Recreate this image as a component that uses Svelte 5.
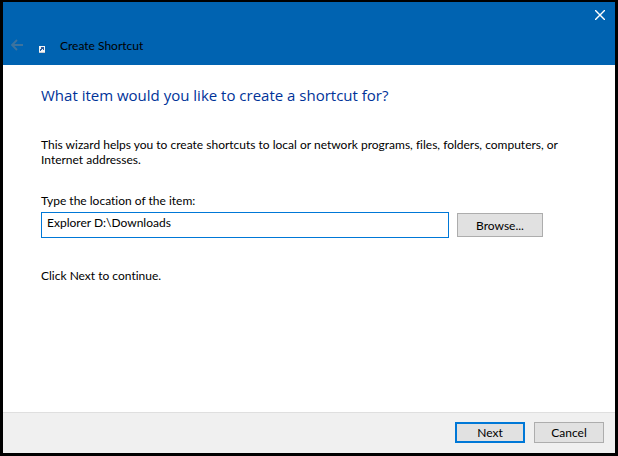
<script>
	let location = $state('Explorer D:\\Downloads');
</script>

<div class="window">
	<header>
		<div class="controls">
			<button class="close" aria-label="Close">
				<svg width="10" height="10" viewBox="0 0 10 10">
					<path d="M0 0L10 10M10 0L0 10" stroke="#fff" stroke-width="1.4" />
				</svg>
			</button>
		</div>
		<div class="title">
			<button class="back" aria-label="Back" disabled>
				<svg width="12" height="12" viewBox="0 0 12 12" fill="none">
					<path d="M12 6H1M6 1L1 6L6 11" stroke="#3d739e" stroke-width="1.8" />
				</svg>
			</button>
			<svg class="shortcut" width="6" height="7" viewBox="0 0 6 7" shape-rendering="crispEdges">
				<path d="M0 0H6V7H0Z" fill="#f3f4f6" />
				<path d="M2 1H5V4H4V3H3V4H2V5H1V3H2Z" fill="#2c5c9c" />
				<path d="M0 6H6V7H0Z" fill="#c9ccd2" />
			</svg>
			<span>Create Shortcut</span>
		</div>
	</header>

	<main>
		<h1>What item would you like to create a shortcut for?</h1>
		<p class="intro">This wizard helps you to create shortcuts to local or network programs, files, folders, computers, or Internet addresses.</p>
		<label for="location">Type the location of the item:</label>
		<div class="row">
			<input id="location" type="text" bind:value={location} />
			<button class="btn browse">Browse...</button>
		</div>
		<p>Click Next to continue.</p>
	</main>

	<footer>
		<button class="btn default">Next</button>
		<button class="btn">Cancel</button>
	</footer>
</div>

<style>
	:global(body) {
		background: #000;
	}

	.window {
		box-sizing: border-box;
		display: flex;
		flex-direction: column;
		min-height: 100vh;
		border: 3px solid #000;
		border-top-width: 2px;
		background: #fff;
		color: #000;
		font-family: "Segoe UI", Lato, sans-serif;
		font-size: 12px;
		line-height: 15px;
		font-variant-ligatures: none;
	}

	button, input {
		font: inherit;
		color: inherit;
	}

	header {
		background: #0063b1;
		padding-bottom: 5px;
	}

	.controls {
		display: flex;
		justify-content: flex-end;
	}

	.close, .back {
		display: flex;
		border: 0;
		padding: 0;
		background: none;
	}

	.close {
		padding: 8px 10px;
	}

	.title {
		display: flex;
		align-items: center;
		height: 32px;
		padding-left: 8px;
	}

	.title span {
		padding-top: 2px;
	}

	.back {
		padding-top: 2px;
	}

	.shortcut {
		margin: 10px 15px 0 16px;
	}

	main {
		flex: 1;
		padding: 19px 38px;
	}

	h1 {
		margin: 0 0 31px;
		font-family: "Segoe UI", "Open Sans", sans-serif;
		font-size: 15px;
		line-height: 22px;
		font-weight: 400;
		color: #003399;
	}

	p {
		margin: 0;
	}

	.intro {
		margin-bottom: 26px;
	}

	label {
		display: block;
		margin-bottom: 4px;
	}

	.row {
		display: flex;
		align-items: center;
		gap: 8px;
		margin: 0 34px 30px 0;
	}

	input {
		box-sizing: border-box;
		flex: 1;
		min-width: 0;
		height: 26px;
		padding: 0 5px 5px;
		border: 1px solid #0078d7;
		border-radius: 0;
		background: #fff;
		outline: none;
	}

	.btn {
		box-sizing: border-box;
		width: 70px;
		height: 21px;
		padding: 0;
		border: 1px solid #adadad;
		background: #e1e1e1;
	}

	.browse {
		width: 86px;
		height: 24px;
	}

	.default {
		border: 2px solid #0078d7;
	}

	footer {
		display: flex;
		justify-content: flex-end;
		gap: 9px;
		padding: 9px 11px 10px;
		border-top: 1px solid #dfdfdf;
		background: #f0f0f0;
	}
</style>
